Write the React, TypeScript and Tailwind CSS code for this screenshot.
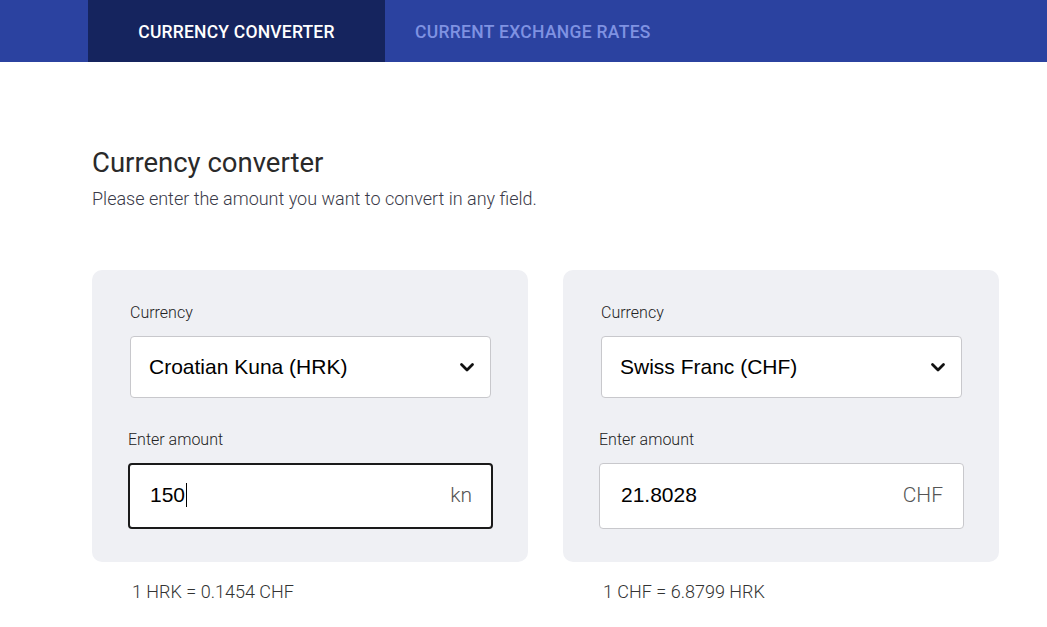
import { useState } from "react";

const roboto = { fontFamily: "Roboto, 'Liberation Sans', sans-serif" };

function Chevron() {
  return (
    <svg width="16" height="12" viewBox="0 0 16 12" fill="none">
      <path
        d="M2.5 3.5 L8 9 L13.5 3.5"
        stroke="#111"
        strokeWidth="2.8"
        strokeLinecap="round"
        strokeLinejoin="round"
      />
    </svg>
  );
}

interface CardProps {
  currency: string;
  amount: string;
  suffix: string;
  rate: string;
  focused?: boolean;
}

function ConverterCard({ currency, amount, suffix, rate, focused }: CardProps) {
  return (
    <div className="flex flex-col w-[436px]">
      <div className="bg-[#eff0f4] rounded-[10px] pt-[35px] pb-[33px] pl-[36px] pr-[35px]">
        <label className="block ml-[2px] text-[16px] leading-[16px] font-light text-[#222]" style={roboto}>
          Currency
        </label>
        <div className="mx-[2px] mt-[15px] h-[62px] bg-white border border-[#c8c8cc] rounded-[4px] flex items-center justify-between pl-[18px] pr-[15px]">
          <span className="text-[21px] text-black font-['Liberation_Sans',Arial,sans-serif]">{currency}</span>
          <Chevron />
        </div>
        <label className="block mt-[34px] text-[16px] leading-[16px] font-light text-[#222]" style={roboto}>
          Enter amount
        </label>
        <div
          className={
            focused
              ? "mt-[15px] h-[66px] bg-white border-2 border-[#1a1a1a] rounded-[4px] flex items-center justify-between pl-[20px] pr-[19px]"
              : "mt-[15px] h-[66px] bg-white border border-[#c8c8cc] rounded-[4px] flex items-center justify-between pl-[21px] pr-[20px]"
          }
        >
          <span className="flex items-center text-[21px] text-black font-['Liberation_Sans',Arial,sans-serif] -mt-[2px]">
            {amount}
            {focused && <span className="inline-block w-[1px] h-[24px] bg-black ml-[1px]" />}
          </span>
          <span className="text-[21px] font-light text-[#555]" style={roboto}>
            {suffix}
          </span>
        </div>
      </div>
      <p className="mt-[18px] ml-[40px] text-[18px] leading-[24px] font-light text-[#333]" style={roboto}>
        {rate}
      </p>
    </div>
  );
}

export default function App() {
  const [tab] = useState(0);

  return (
    <div className="min-h-[627px] bg-white" style={roboto}>
      <nav className="h-[62px] bg-[#2b42a0] flex pl-[88px]">
        <div
          className={
            tab === 0
              ? "w-[297px] bg-[#15245e] flex items-center justify-center pt-[2px] text-white text-[17.5px] font-medium tracking-[0.2px]"
              : "w-[297px] flex items-center justify-center pt-[2px] text-[#8294e2] text-[17.5px] font-medium"
          }
        >
          CURRENCY CONVERTER
        </div>
        <div className="flex items-center pl-[30px] pt-[2px] text-[#7f92e2] text-[17.5px] font-medium tracking-[0.3px]">
          CURRENT EXCHANGE RATES
        </div>
      </nav>

      <main className="pl-[92px] pt-[83px]">
        <h1 className="text-[27.5px] leading-[36px] text-[#2a2a2a] font-normal">Currency converter</h1>
        <p className="mt-[6px] text-[18px] leading-[24px] font-light text-[#3a3a48]">
          Please enter the amount you want to convert in any field.
        </p>

        <div className="mt-[59px] flex gap-[35px]">
          <ConverterCard
            currency="Croatian Kuna (HRK)"
            amount="150"
            suffix="kn"
            rate="1 HRK = 0.1454 CHF"
            focused
          />
          <ConverterCard
            currency="Swiss Franc (CHF)"
            amount="21.8028"
            suffix="CHF"
            rate="1 CHF = 6.8799 HRK"
          />
        </div>
      </main>
    </div>
  );
}
